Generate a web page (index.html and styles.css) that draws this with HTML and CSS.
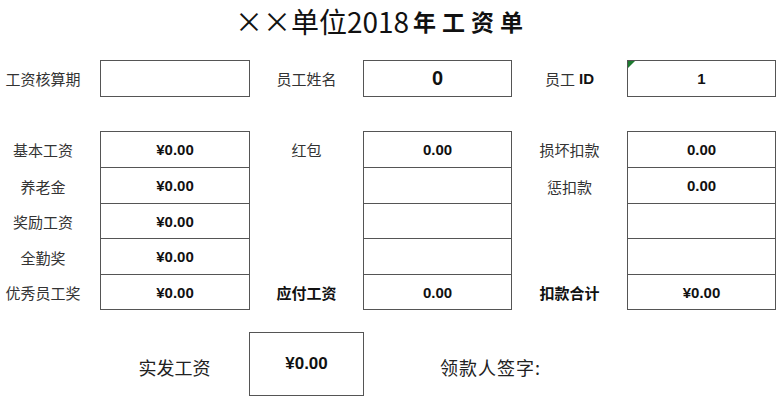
FILE: index.html
```html
<!DOCTYPE html>
<html lang="zh-CN">
<head>
<meta charset="utf-8">
<title>工资单</title>
<link rel="stylesheet" href="styles.css">
</head>
<body>
<div class="page">
  <h1 class="title"><span class="t-a">××单位2018</span><span class="t-b">年工资单</span></h1>

  <div class="row-top">
    <div class="lbl lbl-first">工资核算期</div>
    <div class="box"></div>
    <div class="lbl">员工姓名</div>
    <div class="box val-big">0</div>
    <div class="lbl"><span class="cjk">员工</span> <b class="id">ID</b></div>
    <div class="box box-flag">1</div>
  </div>

  <div class="sheet">
    <div class="lbl lbl-first">基本工资</div>
    <div class="cell top wide">¥0.00</div>
    <div class="lbl">红包</div>
    <div class="cell top">0.00</div>
    <div class="lbl">损坏扣款</div>
    <div class="cell top">0.00</div>

    <div class="lbl lbl-first">养老金</div>
    <div class="cell wide">¥0.00</div>
    <div class="lbl"></div>
    <div class="cell"></div>
    <div class="lbl">惩扣款</div>
    <div class="cell">0.00</div>

    <div class="lbl lbl-first">奖励工资</div>
    <div class="cell wide">¥0.00</div>
    <div class="lbl"></div>
    <div class="cell"></div>
    <div class="lbl"></div>
    <div class="cell"></div>

    <div class="lbl lbl-first">全勤奖</div>
    <div class="cell wide">¥0.00</div>
    <div class="lbl"></div>
    <div class="cell"></div>
    <div class="lbl"></div>
    <div class="cell"></div>

    <div class="lbl lbl-first">优秀员工奖</div>
    <div class="cell wide">¥0.00</div>
    <div class="lbl lbl-bold">应付工资</div>
    <div class="cell">0.00</div>
    <div class="lbl lbl-bold">扣款合计</div>
    <div class="cell">¥0.00</div>
  </div>

  <div class="row-bottom">
    <div class="spacer"></div>
    <div class="lbl-big">实发工资</div>
    <div class="box-total">¥0.00</div>
    <div class="spacer"></div>
    <div class="lbl-big lbl-sign">领款人签字:</div>
  </div>
</div>
</body>
</html>
```

FILE: styles.css
```css
* { box-sizing: border-box; }
html, body { margin: 0; padding: 0; background: #fff; }
body {
  width: 780px;
  height: 402px;
  overflow: hidden;
  font-family: "Noto Sans CJK SC", "Liberation Sans", sans-serif;
  color: #333;
}
.page { width: 780px; }

.title {
  margin: 0;
  height: 42px;
  padding-right: 16px;
  display: flex;
  justify-content: center;
  align-items: center;
  font-weight: normal;
  color: #111;
  line-height: 1;
}
.t-a { font-size: 28px; }
.t-b { font-size: 23px; font-weight: bold; letter-spacing: 6px; margin-left: 4px; }

.row-top {
  margin-top: 18px;
  display: grid;
  grid-template-columns: 100px 150px 113px 149px 115px 149px;
  height: 37px;
}
.lbl {
  display: flex;
  align-items: center;
  justify-content: center;
  font-size: 15px;
  color: #333;
  white-space: nowrap;
}
.lbl-first { padding-right: 14px; }
.lbl-bold { font-weight: bold; color: #111; }
.lbl .cjk { color: #333; }
.lbl .id {
  font-family: "Liberation Sans", sans-serif;
  font-weight: bold;
  color: #111;
  margin-left: 4px;
}

.box {
  border: 1px solid #555;
  display: flex;
  align-items: center;
  justify-content: center;
  font-family: "Liberation Sans", sans-serif;
  font-weight: bold;
  font-size: 15px;
  color: #111;
}
.val-big { font-size: 20px; }
.box-flag { position: relative; }
.box-flag::before {
  content: "";
  position: absolute;
  left: 0;
  top: 0;
  width: 0;
  height: 0;
  border-top: 7px solid #1d7a30;
  border-right: 7px solid transparent;
}

.sheet {
  margin-top: 34px;
  display: grid;
  grid-template-columns: 100px 150px 113px 149px 115px 149px;
  grid-template-rows: 37px 36px 35px 36px 35px;
}
.cell {
  border-left: 1px solid #555;
  border-right: 1px solid #555;
  border-bottom: 1px solid #555;
  display: flex;
  align-items: center;
  justify-content: center;
  font-family: "Liberation Sans", sans-serif;
  font-weight: bold;
  font-size: 15px;
  color: #111;
}
.cell.top { border-top: 1px solid #555; }

.row-bottom {
  margin-top: 22px;
  display: grid;
  grid-template-columns: 100px 149px 115px 76px auto;
  height: 64px;
}
.lbl-big {
  display: flex;
  align-items: center;
  justify-content: center;
  font-size: 18px;
  color: #222;
  padding-top: 6px;
  white-space: nowrap;
}
.lbl-sign { justify-content: flex-start; font-size: 18px; letter-spacing: 1px; }
.box-total {
  border: 1px solid #555;
  display: flex;
  align-items: center;
  justify-content: center;
  font-family: "Liberation Sans", sans-serif;
  font-weight: bold;
  font-size: 17px;
  color: #111;
}
```
